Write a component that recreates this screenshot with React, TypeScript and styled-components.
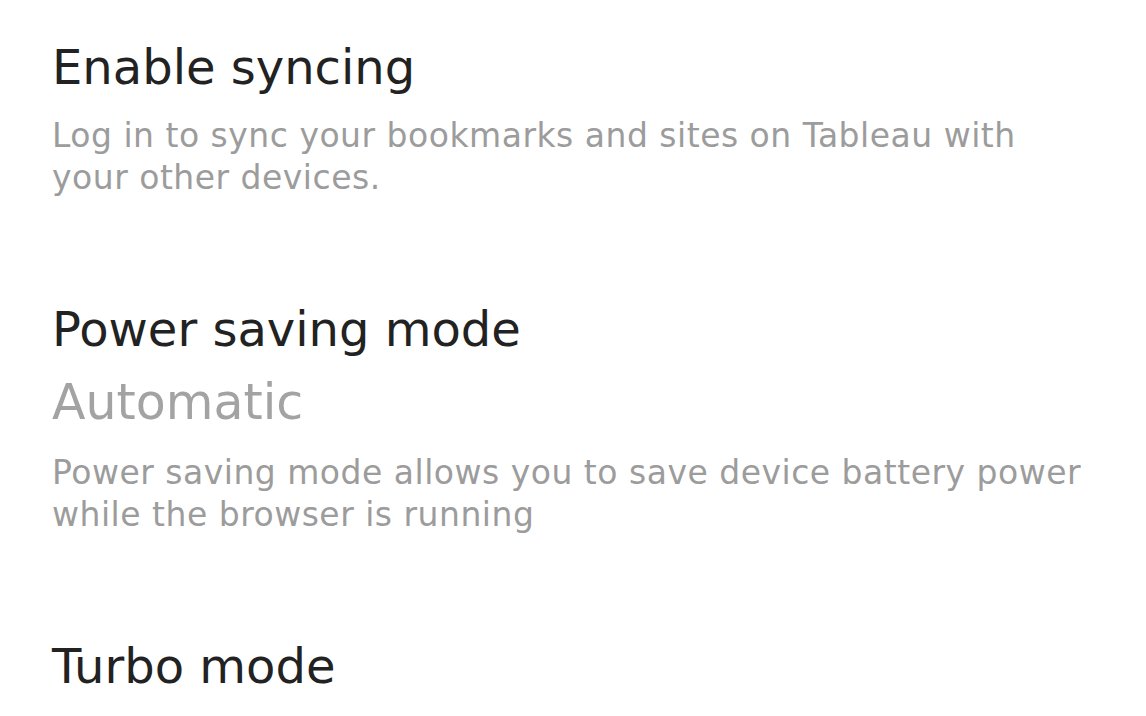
import styled, { createGlobalStyle } from "styled-components";

const GlobalStyle = createGlobalStyle`
  html, body {
    margin: 0;
    padding: 0;
    background: #ffffff;
  }
  body {
    font-family: "DejaVu Sans", "Noto Sans", sans-serif;
  }
`;

const Page = styled.div`
  display: flex;
  flex-direction: column;
  gap: 102px;
  padding: 39px 20px 0 52px;
  height: 716px;
  box-sizing: border-box;
  overflow: hidden;
`;

const Section = styled.section`
  display: flex;
  flex-direction: column;
`;

const Title = styled.div`
  font-size: 48px;
  line-height: 56px;
  color: #222222;
  font-weight: 400;
`;

const Value = styled.div`
  margin-top: 16px;
  font-size: 49px;
  line-height: 60px;
  color: #a3a3a3;
`;

const Description = styled.div<{ $gap: number }>`
  margin-top: ${(p) => p.$gap}px;
  font-size: 33px;
  line-height: 42px;
  letter-spacing: 0.5px;
  color: #9c9c9c;
  max-width: 1035px;
`;

type Setting = {
  title: string;
  value?: string;
  description?: string;
};

const settings: Setting[] = [
  {
    title: "Enable syncing",
    description:
      "Log in to sync your bookmarks and sites on Tableau with your other devices.",
  },
  {
    title: "Power saving mode",
    value: "Automatic",
    description:
      "Power saving mode allows you to save device battery power while the browser is running",
  },
  { title: "Turbo mode" },
];

export default function App() {
  return (
    <>
      <GlobalStyle />
      <Page>
        {settings.map((s) => (
          <Section key={s.title}>
            <Title>{s.title}</Title>
            {s.value && <Value>{s.value}</Value>}
            {s.description && (
              <Description $gap={s.value ? 19 : 20}>{s.description}</Description>
            )}
          </Section>
        ))}
      </Page>
    </>
  );
}
